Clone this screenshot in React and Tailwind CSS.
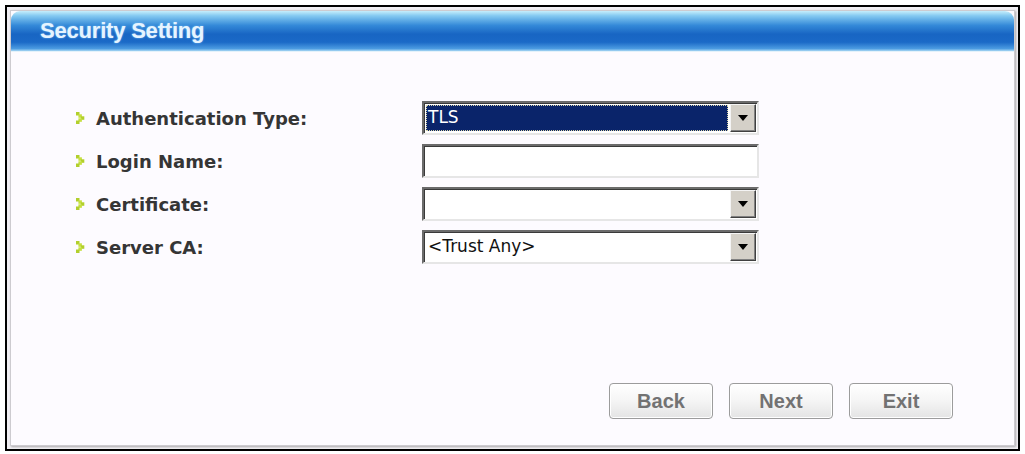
import React from "react";

function Arrow() {
  return (
    <svg width="9" height="12" viewBox="0 0 9 12" className="shrink-0">
      <rect x="0" y="0" width="3.5" height="3.5" fill="#b2cf2c" />
      <rect x="2.4" y="2.3" width="3.5" height="3.5" fill="#c6e040" />
      <rect x="4.8" y="4.3" width="3.5" height="3.5" fill="#b2cf2c" />
      <rect x="2.4" y="6.3" width="3.5" height="3.5" fill="#c6e040" />
      <rect x="0" y="8.5" width="3.5" height="3.5" fill="#b2cf2c" />
    </svg>
  );
}

function DropButton() {
  return (
    <div className="w-[26px] h-full bg-[#d4d0c8] border border-t-[#f4f4f4] border-l-[#f4f4f4] border-b-[#404040] border-r-[#404040] shadow-[inset_-1px_-1px_0_#808080] flex items-center justify-center shrink-0">
      <svg width="10" height="6" viewBox="0 0 10 6">
        <polygon points="0,0 10,0 5,6" fill="#000" />
      </svg>
    </div>
  );
}

function Sunken({ children }) {
  return (
    <div className="w-[337px] h-[34px] border-2 border-t-[#6b6b6b] border-l-[#6b6b6b] border-b-[#e6e6e6] border-r-[#e6e6e6] bg-white flex items-stretch p-[1px] shadow-[inset_1px_1px_0_#3a3a3a]">
      {children}
    </div>
  );
}

function Label({ text }) {
  return (
    <div className="flex items-center h-[34px]">
      <Arrow />
      <span className="ml-[11px] text-[18px] font-bold text-[#353535] font-['DejaVu_Sans',sans-serif]">
        {text}
      </span>
    </div>
  );
}

function Btn({ text }) {
  return (
    <div className="w-[104px] h-[36px] rounded-[4px] border border-[#9c9c9c] bg-[linear-gradient(180deg,#ffffff_0%,#f6f6f6_45%,#e4e4e4_100%)] shadow-[inset_0_0_0_1px_#ffffff] flex items-center justify-center text-[20px] font-bold text-[#727272] font-['Liberation_Sans',Arial,sans-serif]">
      {text}
    </div>
  );
}

export default function App() {
  const field = "font-['DejaVu_Sans',sans-serif] text-[17px]";
  return (
    <div className="w-[1025px] h-[454px] bg-white pt-[5px] pl-[5px]">
      <div className="w-[1015px] h-[446px] border-2 border-black bg-[#f1eff3] p-[3px]">
        <div className="h-full border border-[#cdcbd0] bg-[#fdfbff] shadow-[1px_1px_2px_rgba(0,0,0,0.3)] flex flex-col">
          <div className="h-[40px] rounded-t-[9px] bg-[linear-gradient(180deg,#c6eefc_0%,#84c9f1_12%,#3489d8_36%,#1865c3_58%,#1b6ac7_78%,#4b9be1_94%,#a6d6f3_100%)] flex items-center pl-[29px] pb-[2px]">
            <span className="text-[22px] font-bold text-[#e6f4ff] tracking-[-0.2px] font-['Liberation_Sans',Arial,sans-serif] [text-shadow:0_0_2px_#7fc3f5]">
              Security Setting
            </span>
          </div>
          <div className="h-px bg-[#e4f2fb]" />
          <div className="flex-1 flex flex-col pl-[65px] pr-[61px] pb-[26px]">
            <div className="mt-[49px] flex">
              <div className="w-[346px] flex flex-col gap-[9px]">
                <Label text="Authentication Type:" />
                <Label text="Login Name:" />
                <Label text="Certificate:" />
                <Label text="Server CA:" />
              </div>
              <div className="flex flex-col gap-[9px]">
                <Sunken>
                  <div className="flex-1 m-[1px] mr-[2px] bg-[#0a246a] border border-dotted border-[#d8d4a8] flex items-center pl-[1px]">
                    <span className={`${field} text-white`}>TLS</span>
                  </div>
                  <DropButton />
                </Sunken>
                <Sunken>
                  <div className="flex-1" />
                </Sunken>
                <Sunken>
                  <div className="flex-1" />
                  <DropButton />
                </Sunken>
                <Sunken>
                  <div className="flex-1 flex items-center pl-[3px]">
                    <span className={`${field} text-[#111]`}>&lt;Trust Any&gt;</span>
                  </div>
                  <DropButton />
                </Sunken>
              </div>
            </div>
            <div className="mt-auto flex justify-end gap-[16px]">
              <Btn text="Back" />
              <Btn text="Next" />
              <Btn text="Exit" />
            </div>
          </div>
        </div>
      </div>
    </div>
  );
}
